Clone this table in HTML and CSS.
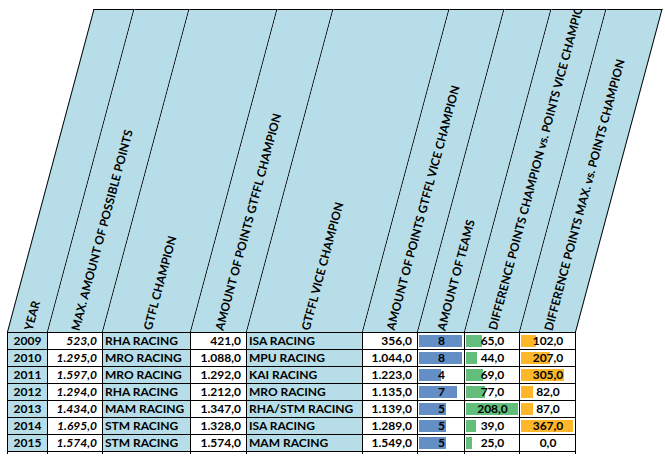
FILE: index.html
```html
<!DOCTYPE html>
<html lang="en">
<head>
<meta charset="utf-8">
<title>GTFFL Champions</title>
<link rel="stylesheet" href="styles.css">
</head>
<body>
<div class="sheet">
  <div class="head">
    <div class="hc"><span class="ht">YEAR</span></div>
    <div class="hc"><span class="ht">MAX. AMOUNT OF POSSIBLE POINTS</span></div>
    <div class="hc"><span class="ht">GTFL CHAMPION</span></div>
    <div class="hc"><span class="ht">AMOUNT OF POINTS GTFFL CHAMPION</span></div>
    <div class="hc"><span class="ht">GTFFL VICE CHAMPION</span></div>
    <div class="hc"><span class="ht">AMOUNT OF POINTS GTFFL VICE CHAMPION</span></div>
    <div class="hc"><span class="ht">AMOUNT OF TEAMS</span></div>
    <div class="hc"><span class="ht">DIFFERENCE POINTS CHAMPION vs. POINTS VICE CHAMPION</span></div>
    <div class="hc"><span class="ht">DIFFERENCE POINTS MAX. vs. POINTS CHAMPION</span></div>
  </div>
  <div class="body">
    <div class="row">
      <div class="c yr">2009</div>
      <div class="c num it">523,0</div>
      <div class="c team">RHA RACING</div>
      <div class="c num">421,0</div>
      <div class="c team">ISA RACING</div>
      <div class="c num">356,0</div>
      <div class="c db blue"><span class="bar" style="width:43px"></span><span class="val">8</span></div>
      <div class="c db green"><span class="bar" style="width:16.3px"></span><span class="val">65,0</span></div>
      <div class="c db orange"><span class="bar" style="width:14.5px"></span><span class="val">102,0</span></div>
    </div>
    <div class="row">
      <div class="c yr">2010</div>
      <div class="c num it">1.295,0</div>
      <div class="c team">MRO RACING</div>
      <div class="c num">1.088,0</div>
      <div class="c team">MPU RACING</div>
      <div class="c num">1.044,0</div>
      <div class="c db blue"><span class="bar" style="width:43px"></span><span class="val">8</span></div>
      <div class="c db green"><span class="bar" style="width:11px"></span><span class="val">44,0</span></div>
      <div class="c db orange"><span class="bar" style="width:29.3px"></span><span class="val">207,0</span></div>
    </div>
    <div class="row">
      <div class="c yr">2011</div>
      <div class="c num it">1.597,0</div>
      <div class="c team">MRO RACING</div>
      <div class="c num">1.292,0</div>
      <div class="c team">KAI RACING</div>
      <div class="c num">1.223,0</div>
      <div class="c db blue"><span class="bar" style="width:21.5px"></span><span class="val">4</span></div>
      <div class="c db green"><span class="bar" style="width:17.3px"></span><span class="val">69,0</span></div>
      <div class="c db orange"><span class="bar" style="width:43.2px"></span><span class="val">305,0</span></div>
    </div>
    <div class="row">
      <div class="c yr">2012</div>
      <div class="c num it">1.294,0</div>
      <div class="c team">RHA RACING</div>
      <div class="c num">1.212,0</div>
      <div class="c team">MRO RACING</div>
      <div class="c num">1.135,0</div>
      <div class="c db blue"><span class="bar" style="width:37.6px"></span><span class="val">7</span></div>
      <div class="c db green"><span class="bar" style="width:19.3px"></span><span class="val">77,0</span></div>
      <div class="c db orange"><span class="bar" style="width:11.6px"></span><span class="val">82,0</span></div>
    </div>
    <div class="row">
      <div class="c yr">2013</div>
      <div class="c num it">1.434,0</div>
      <div class="c team">MAM RACING</div>
      <div class="c num">1.347,0</div>
      <div class="c team">RHA/STM RACING</div>
      <div class="c num">1.139,0</div>
      <div class="c db blue"><span class="bar" style="width:26.9px"></span><span class="val">5</span></div>
      <div class="c db green"><span class="bar" style="width:52px"></span><span class="val">208,0</span></div>
      <div class="c db orange"><span class="bar" style="width:12.3px"></span><span class="val">87,0</span></div>
    </div>
    <div class="row">
      <div class="c yr">2014</div>
      <div class="c num it">1.695,0</div>
      <div class="c team">STM RACING</div>
      <div class="c num">1.328,0</div>
      <div class="c team">ISA RACING</div>
      <div class="c num">1.289,0</div>
      <div class="c db blue"><span class="bar" style="width:26.9px"></span><span class="val">5</span></div>
      <div class="c db green"><span class="bar" style="width:9.8px"></span><span class="val">39,0</span></div>
      <div class="c db orange"><span class="bar" style="width:52px"></span><span class="val">367,0</span></div>
    </div>
    <div class="row">
      <div class="c yr">2015</div>
      <div class="c num it">1.574,0</div>
      <div class="c team">STM RACING</div>
      <div class="c num">1.574,0</div>
      <div class="c team">MAM RACING</div>
      <div class="c num">1.549,0</div>
      <div class="c db blue"><span class="bar" style="width:26.9px"></span><span class="val">5</span></div>
      <div class="c db green"><span class="bar" style="width:6.3px"></span><span class="val">25,0</span></div>
      <div class="c db orange"><span class="bar" style="width:0px"></span><span class="val">0,0</span></div>
    </div>
    <div class="row stub">
      <div class="s"></div><div class="s"></div><div class="s"></div><div class="s"></div><div class="s"></div><div class="s"></div><div class="s"></div><div class="s"></div><div class="s"></div>
    </div>
  </div>
</div>
</body>
</html>
```

FILE: styles.css
```css
* {
  box-sizing: border-box;
}

body {
  margin: 0;
  background: #ffffff;
  color: #000000;
  font-family: Lato, "Liberation Sans", sans-serif;
  font-weight: 700;
}

.sheet {
  padding: 9px 0 0 7px;
}

.head,
.row,
.body {
  width: 569px;
}

.head,
.row {
  display: grid;
  grid-template-columns: 41px 55px 88px 56px 116px 55px 47px 55px 56px;
}

/* slanted header cells */
.hc {
  height: 323px;
  background: #b7dee8;
  border-top: 1px solid #000;
  border-right: 1px solid #000;
  transform-origin: 0 100%;
  transform: skewX(-15deg);
  display: flex;
  justify-content: center;
  align-items: flex-end;
  padding-bottom: 2px;
  overflow: hidden;
}

.hc:first-child {
  border-left: 1px solid #000;
}

.ht {
  writing-mode: vertical-rl;
  white-space: nowrap;
  font-size: 11.8px;
  line-height: 14px;
  transform-origin: 50% 100%;
  transform: skewX(15deg) rotate(15deg) translateY(-100%) rotate(180deg);
}

/* data rows */
.body {
  border-top: 1px solid #000;
}

.c {
  height: 17px;
  border-right: 1px solid #000;
  border-bottom: 1px solid #000;
  font-size: 12px;
  line-height: 16px;
  white-space: nowrap;
  overflow: hidden;
}

.row > .c:first-child,
.row > .s:first-child {
  border-left: 1px solid #000;
}

.yr {
  background: #b7dee8;
  text-align: center;
}

.num {
  background: #ffffff;
  text-align: right;
  padding-right: 5px;
}

.it {
  font-style: italic;
}

.team {
  background: #b7dee8;
  padding-left: 2px;
}

.db {
  background: #ffffff;
  display: grid;
  padding-left: 1px;
}

.db > * {
  grid-area: 1 / 1;
}

.bar {
  height: 12px;
  align-self: center;
  justify-self: start;
}

.blue .bar {
  background: #638ec6;
}

.green .bar {
  background: #63be7b;
}

.orange .bar {
  background: #ffb628;
}

.val {
  text-align: center;
  position: relative;
}

.s {
  height: 2px;
  border-right: 1px solid #000;
}
```
